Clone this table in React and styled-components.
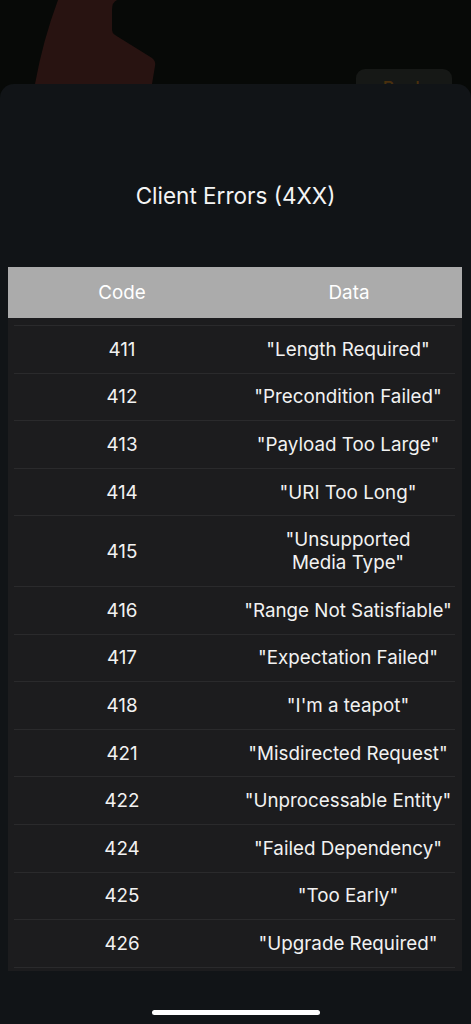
import React from "react";
import styled, { createGlobalStyle } from "styled-components";

const GlobalStyle = createGlobalStyle`
  html, body {
    margin: 0;
    padding: 0;
    background: #070907;
  }
  body {
    font-family: "Inter", "Roboto", sans-serif;
    -webkit-font-smoothing: antialiased;
  }
`;

const Screen = styled.div`
  width: 471px;
  height: 1024px;
  display: flex;
  flex-direction: column;
  overflow: hidden;
  background: #070907;
`;

const Backdrop = styled.div`
  height: 84px;
  flex-shrink: 0;
  display: flex;
  align-items: flex-start;
  justify-content: space-between;
  overflow: hidden;
`;

const Mark = styled.svg`
  margin-left: 35px;
  flex-shrink: 0;
`;

const BackButton = styled.div`
  margin: 69px 19px 0 0;
  width: 96px;
  height: 40px;
  border-radius: 9px;
  background: #161816;
  color: #4a300e;
  font-size: 18px;
  font-weight: 500;
  display: flex;
  justify-content: center;
  padding-top: 9px;
  box-sizing: border-box;
`;

const Sheet = styled.div`
  flex: 1;
  display: flex;
  flex-direction: column;
  background: #111417;
  border-radius: 14px 14px 0 0;
`;

const Title = styled.h1`
  margin: 99px 0 0;
  text-align: center;
  color: #f4f4f4;
  font-size: 22.5px;
  font-weight: 400;
  line-height: 26px;
`;

const Table = styled.div`
  margin: 58px 9px 0 8px;
`;

const Header = styled.div`
  height: 51px;
  background: #ababab;
  display: grid;
  grid-template-columns: 228px 1fr;
  align-items: center;
  color: #ffffff;
  font-size: 18.8px;
`;

const HeaderCell = styled.div`
  text-align: center;
`;

const Body = styled.div`
  background: #1c1c1e;
  padding: 7px 7px 3px 6px;
`;

const Row = styled.div`
  display: grid;
  grid-template-columns: 216px 1fr;
  align-items: center;
  padding: 11.8px 0;
  border-top: 1px solid #2a2a2c;
  color: #f2f2f2;
  font-size: 18.8px;
  line-height: 23px;

  &:last-child {
    border-bottom: 1px solid #2a2a2c;
  }
`;

const Cell = styled.div`
  text-align: center;
  text-wrap: balance;
  padding-left: ${(p) => (p.$data ? "11px" : "0")};
`;

const HomeBar = styled.div`
  margin: auto auto 9px;
  width: 168px;
  height: 5px;
  border-radius: 3px;
  background: #ffffff;
`;

const errors = [
  ["411", "Length Required"],
  ["412", "Precondition Failed"],
  ["413", "Payload Too Large"],
  ["414", "URI Too Long"],
  ["415", "Unsupported Media Type"],
  ["416", "Range Not Satisfiable"],
  ["417", "Expectation Failed"],
  ["418", "I'm a teapot"],
  ["421", "Misdirected Request"],
  ["422", "Unprocessable Entity"],
  ["424", "Failed Dependency"],
  ["425", "Too Early"],
  ["426", "Upgrade Required"],
];

const App = () => {
  return (
    <Screen>
      <GlobalStyle />
      <Backdrop>
        <Mark width="125" height="84" viewBox="0 0 125 84">
          <path
            d="M23 0 L82 0 Q77 2 77 10 L77 30 Q77 33 80 35 L117 58 Q121 61 120 66 L117 84 L0 84 Q8 40 23 0 Z"
            fill="#281311"
          />
        </Mark>
        <BackButton>Back</BackButton>
      </Backdrop>
      <Sheet>
        <Title>Client Errors (4XX)</Title>
        <Table>
          <Header>
            <HeaderCell>Code</HeaderCell>
            <HeaderCell>Data</HeaderCell>
          </Header>
          <Body>
            {errors.map(([code, data]) => (
              <Row key={code}>
                <Cell>{code}</Cell>
                <Cell $data>"{data}"</Cell>
              </Row>
            ))}
          </Body>
        </Table>
        <HomeBar />
      </Sheet>
    </Screen>
  );
};

export default App;
